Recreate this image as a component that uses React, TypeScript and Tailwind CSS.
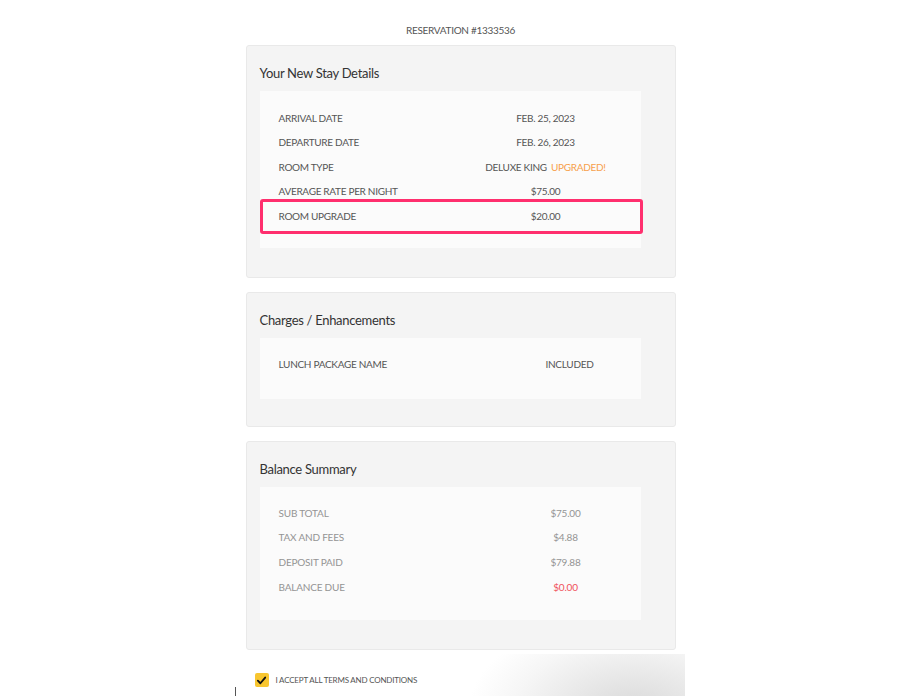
import React from "react";

type Row = { label: string; value: React.ReactNode; highlight?: boolean };

function Card({
  title,
  children,
  className = "",
}: {
  title: string;
  children: React.ReactNode;
  className?: string;
}) {
  return (
    <div
      className={`w-[430px] rounded-[3px] border border-[#e9e9e9] bg-[#f4f4f4] pl-[13px] pt-[16px] ${className}`}
    >
      <h2 className="h-[22px] text-[13px] leading-[22px] tracking-[-0.3px] text-[#333]">{title}</h2>
      <div className="mt-[7px] w-[381px] bg-[#fbfbfb]">{children}</div>
    </div>
  );
}

export default function App() {
  const stay: Row[] = [
    { label: "ARRIVAL DATE", value: "FEB. 25, 2023" },
    { label: "DEPARTURE DATE", value: "FEB. 26, 2023" },
    {
      label: "ROOM TYPE",
      value: (
        <span>
          DELUXE KING <span className="ml-[2px] text-[#f7a04b]">UPGRADED!</span>
        </span>
      ),
    },
    { label: "AVERAGE RATE PER NIGHT", value: "$75.00" },
    { label: "ROOM UPGRADE", value: "$20.00", highlight: true },
  ];
  const balance: Row[] = [
    { label: "SUB TOTAL", value: "$75.00" },
    { label: "TAX AND FEES", value: "$4.88" },
    { label: "DEPOSIT PAID", value: "$79.88" },
    { label: "BALANCE DUE", value: <span className="text-[#f0525b]">$0.00</span> },
  ];

  return (
    <div
      className="relative min-h-[696px] w-[920px] overflow-hidden bg-white"
      style={{ fontFamily: "Lato, 'Noto Sans', sans-serif" }}
    >
      <div className="pointer-events-none absolute left-[470px] top-[654px] h-[42px] w-[215px] bg-[radial-gradient(ellipse_165px_95px_at_76%_135%,#d9d9d9_0%,#ebebeb_45%,#f6f6f6_72%,#ffffff_100%)]" />
      <div className="pointer-events-none absolute left-[235px] top-[687px] h-[9px] w-px bg-[#555]" />
      <div className="relative flex flex-col items-center pt-[21px] pl-[1px]">
        <div className="text-[10px] leading-[18px] tracking-[-0.3px] text-[#555]">RESERVATION #1333536</div>
        <div className="mt-[6px] flex flex-col gap-[14px]">
          <Card title="Your New Stay Details" className="h-[233px]">
            <div className="pt-[15px] pb-[19px]">
              {stay.map((r) =>
                r.highlight ? (
                  <div
                    key={r.label}
                    className="relative -mr-[2px] -my-[5px] flex h-[35px] items-center rounded-[3px] border-[3px] border-[#ff2f6e] text-[10px] tracking-[-0.3px] text-[#555]"
                  >
                    <div className="w-[207px] pl-[16px]">{r.label}</div>
                    <div className="w-[152px] text-center">{r.value}</div>
                  </div>
                ) : (
                  <div key={r.label} className="flex h-[24.5px] items-center text-[10px] tracking-[-0.3px] text-[#555]">
                    <div className="w-[210px] pl-[19px]">{r.label}</div>
                    <div className="w-[152px] text-center">{r.value}</div>
                  </div>
                )
              )}
            </div>
          </Card>
          <Card title="Charges / Enhancements" className="h-[135px]">
            <div className="pt-[14px] pb-[23px]">
              <div className="flex h-[24px] items-center text-[10px] tracking-[-0.3px] text-[#555]">
                <div className="w-[245px] pl-[19px]">LUNCH PACKAGE NAME</div>
                <div className="w-[130px] text-center">INCLUDED</div>
              </div>
            </div>
          </Card>
          <Card title="Balance Summary" className="h-[209px]">
            <div className="pt-[14px] pb-[20px]">
              {balance.map((r) => (
                <div key={r.label} className="flex h-[24.67px] items-center text-[10px] tracking-[-0.2px] text-[#949494]">
                  <div className="w-[240px] pl-[19px]">{r.label}</div>
                  <div className="w-[132px] text-center">{r.value}</div>
                </div>
              ))}
            </div>
          </Card>
        </div>
        <div className="mt-[23px] flex w-[430px] items-center pl-[9px]">
          <div className="flex h-[14px] w-[14px] items-center justify-center rounded-[2px] bg-[#f8c630]">
            <svg width="11" height="11" viewBox="0 0 12 12">
              <path d="M2 6.2 L4.8 9 L10 2.8" fill="none" stroke="#111" strokeWidth="2" strokeLinecap="round" strokeLinejoin="round" />
            </svg>
          </div>
          <span className="ml-[7px] text-[8px] tracking-[-0.2px] text-[#555]">I ACCEPT ALL TERMS AND CONDITIONS</span>
        </div>
      </div>
    </div>
  );
}
